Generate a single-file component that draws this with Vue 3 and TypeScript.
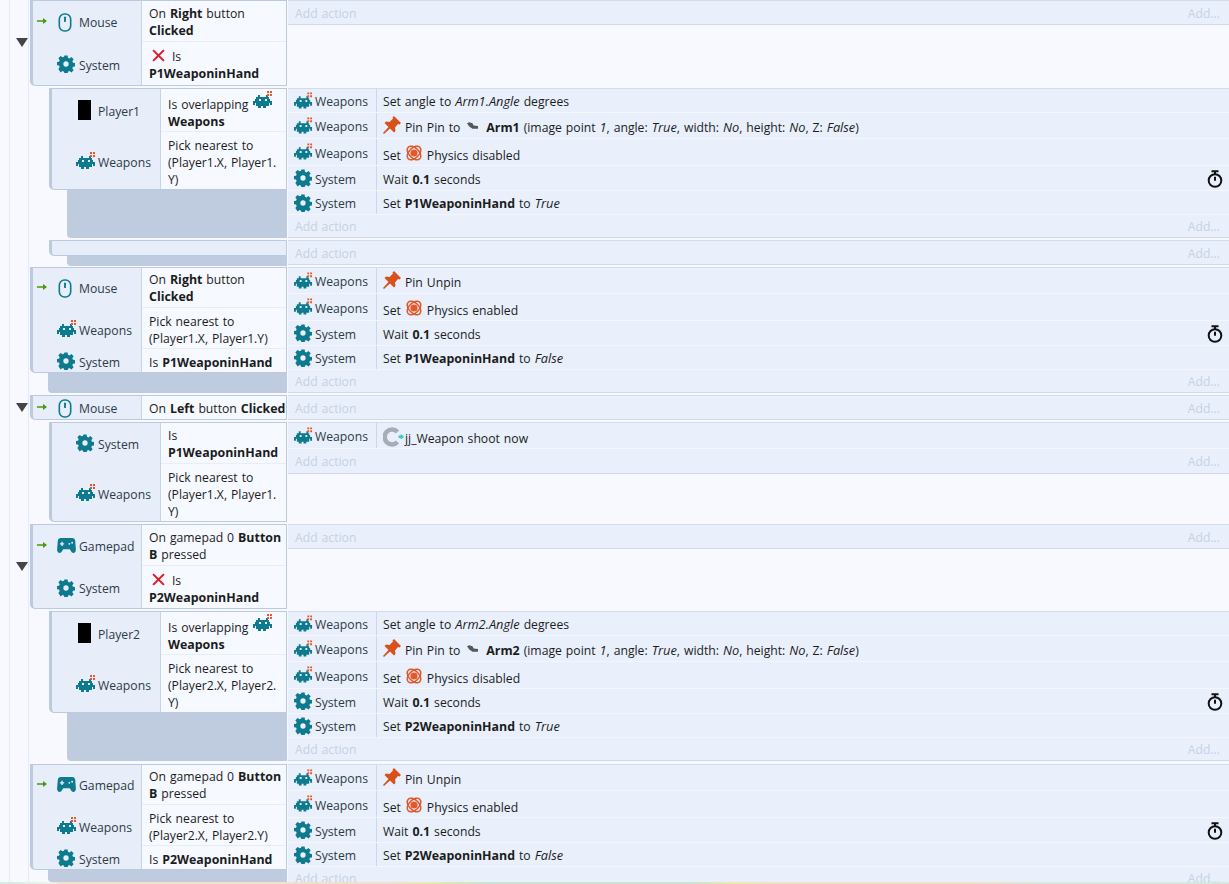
<script setup lang="ts">
type Cond = { obj: string; icon: string; text: string; h: number; arrow?: boolean }
type Act = { obj: string; icon: string; text: string; h: number; timer?: boolean }
type Ev = {
  indent: boolean
  toggle?: boolean
  conds: Cond[]
  acts: Act[]
  tail: number
  addH: number
  h: number
  gap: number
}
type Tok = { k: 't' | 'b' | 'i' | 'ic'; v: string }

const W = 'Weapons'
const S = 'System'
const acts1 = (n: string): Act[] => [
  { obj: W, icon: 'inv', text: `Set angle to ~Arm${n}.Angle~ degrees`, h: 24 },
  { obj: W, icon: 'inv', text: `{pin} Pin Pin to {arm} **Arm${n}** (image point ~1~, angle: ~True~, width: ~No~, height: ~No~, Z: ~False~)`, h: 26 },
  { obj: W, icon: 'inv', text: 'Set {atom} Physics disabled', h: 27 },
  { obj: S, icon: 'gear', text: 'Wait **0.1** seconds', h: 25, timer: true },
  { obj: S, icon: 'gear', text: `Set **P${n}WeaponinHand** to ~True~`, h: 24 },
]
const acts2 = (n: string): Act[] => [
  { obj: W, icon: 'inv', text: '{pin} Pin Unpin', h: 26 },
  { obj: W, icon: 'inv', text: 'Set {atom} Physics enabled', h: 27 },
  { obj: S, icon: 'gear', text: 'Wait **0.1** seconds', h: 25, timer: true },
  { obj: S, icon: 'gear', text: `Set **P${n}WeaponinHand** to ~False~`, h: 24 },
]
const narrow = (n: string) => `Pick nearest to (Player${n}.X, Player${n}.\u200bY)`
const wide = (n: string) => `Pick nearest to (Player${n}.X, Player${n}.Y)`

const events: Ev[] = [
  {
    indent: false, toggle: true, h: 86, gap: 2, tail: 0, addH: 23,
    conds: [
      { obj: 'Mouse', icon: 'mouse', text: 'On **Right** button **Clicked**', h: 41, arrow: true },
      { obj: S, icon: 'gear', text: '{x} Is **P1WeaponinHand**', h: 43 },
    ],
    acts: [],
  },
  {
    indent: true, h: 150, gap: 2, tail: 48, addH: 22,
    conds: [
      { obj: 'Player1', icon: 'rect', text: 'Is overlapping {inv} **Weapons**', h: 43 },
      { obj: W, icon: 'inv', text: narrow('1'), h: 57 },
    ],
    acts: acts1('1'),
  },
  { indent: true, h: 25, gap: 2, tail: 10, addH: 23, conds: [], acts: [] },
  {
    indent: false, h: 126, gap: 2, tail: 20, addH: 22,
    conds: [
      { obj: 'Mouse', icon: 'mouse', text: 'On **Right** button **Clicked**', h: 40, arrow: true },
      { obj: W, icon: 'inv', text: wide('1'), h: 41 },
      { obj: S, icon: 'gear', text: 'Is **P1WeaponinHand**', h: 23 },
    ],
    acts: acts2('1'),
  },
  {
    indent: false, toggle: true, h: 25, gap: 2, tail: 0, addH: 23,
    conds: [{ obj: 'Mouse', icon: 'mouse', text: 'On **Left** button **Clicked**', h: 23, arrow: true }],
    acts: [],
  },
  {
    indent: true, h: 100, gap: 2, tail: 0, addH: 24,
    conds: [
      { obj: S, icon: 'gear', text: 'Is **P1WeaponinHand**', h: 41 },
      { obj: W, icon: 'inv', text: narrow('1'), h: 57 },
    ],
    acts: [{ obj: W, icon: 'inv', text: '{spin}jj_Weapon shoot now', h: 26 }],
  },
  {
    indent: false, toggle: true, h: 85, gap: 2, tail: 0, addH: 23,
    conds: [
      { obj: 'Gamepad', icon: 'pad', text: 'On gamepad 0 **Button** **B** pressed', h: 41, arrow: true },
      { obj: S, icon: 'gear', text: '{x} Is **P2WeaponinHand**', h: 42 },
    ],
    acts: [],
  },
  {
    indent: true, h: 150, gap: 3, tail: 48, addH: 22,
    conds: [
      { obj: 'Player2', icon: 'rect', text: 'Is overlapping {inv} **Weapons**', h: 43 },
      { obj: W, icon: 'inv', text: narrow('2'), h: 57 },
    ],
    acts: acts1('2'),
  },
  {
    indent: false, h: 118, gap: 0, tail: 12, addH: 22,
    conds: [
      { obj: 'Gamepad', icon: 'pad', text: 'On gamepad 0 **Button** **B** pressed', h: 40, arrow: true },
      { obj: W, icon: 'inv', text: wide('2'), h: 41 },
      { obj: S, icon: 'gear', text: 'Is **P2WeaponinHand**', h: 23 },
    ],
    acts: acts2('2'),
  },
]

function parse(s: string): Tok[] {
  return s
    .split(/(\*\*.+?\*\*|~.+?~|\{\w+\})/)
    .filter(Boolean)
    .map((p): Tok => {
      if (p.startsWith('**')) return { k: 'b', v: p.slice(2, -2) }
      if (p.startsWith('~')) return { k: 'i', v: p.slice(1, -1) }
      if (p.startsWith('{')) return { k: 'ic', v: p.slice(1, -1) }
      return { k: 't', v: p }
    })
}
const rowClass = (s: string) => ({
  'has-pin': s.includes('{pin}'),
  'has-atom': s.includes('{atom}'),
  'has-spin': s.includes('{spin}'),
})
</script>

<template>
  <div class="sheet">
    <svg class="sprite" aria-hidden="true">
      <defs>
        <symbol id="i-inv" viewBox="0 0 20 18">
          <path fill="#0e7a8e" d="M5 4h2v2h6V4h2v2h1v2h1v2h2v4h-2v-2h-1v3h-3v2h-3v-2H8v2H5v-2H3v-3H2v2H0v-4h2V8h1V6h2zM6 8v2h2V8zm6 0v2h2V8z" />
          <path fill="#e8562a" d="M14 0h2v2h-2zM17 0h2v2h-2zM14 3h2v2h-2zM17 3h2v2h-2z" />
        </symbol>
        <symbol id="i-gear" viewBox="0 0 18 18">
          <path fill="#0e7a8e" fill-rule="evenodd" d="M7.300 0h3.400l.4 2.400 1.600.7 2-1.400 2.400 2.400-1.400 2 .7 1.600 2.400.4v3.400l-2.400.4-.7 1.600 1.400 2-2.400 2.400-2-1.400-1.600.7-.4 2.400H7.300l-.4-2.400-1.600-.7-2 1.400L.9 14.300l1.400-2-.7-1.600-2.400-.4V6.900l2.400-.4.7-1.600-1.400-2 2.400-2.400 2 1.400 1.600-.7zM9 6.200a2.800 2.800 0 1 0 0 5.600 2.800 2.800 0 0 0 0-5.600z" transform="translate(.5 .5) scale(.945)" />
        </symbol>
        <symbol id="i-mouse" viewBox="0 0 14 20">
          <rect x="1" y="1" width="12" height="18" rx="5.500" fill="none" stroke="#0e7a8e" stroke-width="1.700" />
          <rect x="6" y="3.600" width="2" height="6" rx="1" fill="#0e7a8e" />
        </symbol>
        <symbol id="i-pad" viewBox="0 0 20 16">
          <path fill="#0e7a8e" fill-rule="evenodd" d="M4 0h12c2 0 3 1.200 3.300 3L20 12c.2 2-1 4-2.600 4-1.200 0-1.900-.8-2.600-1.800L13.500 12h-7l-1.300 2.200C4.500 15.200 3.800 16 2.600 16 1 16-.2 14 0 12L.7 3C1 1.200 2 0 4 0zM4.500 4v1.500H3v1.500h1.500v1.500H6V7h1.500V5.500H6V4zM13 5.200a1 1 0 1 0 0 2 1 1 0 0 0 0-2zm3-1.200a1 1 0 1 0 0 2 1 1 0 0 0 0-2z" />
        </symbol>
        <symbol id="i-pin" viewBox="0 0 18 18">
          <path fill="#d8501c" d="M11 0 18 7l-1.500 1.500L15 8l-3 3.500.5 3.500-1.500 1.500-4-4L1 18l-1-1 5.500-6-4-4L3 5.500l3.500.5L10 2.500 9.500 1.500z" />
        </symbol>
        <symbol id="i-atom" viewBox="0 0 18 18">
          <g fill="none" stroke="#e2592b" stroke-width="1.600">
            <ellipse cx="9" cy="9" rx="8.200" ry="5" transform="rotate(45 9 9)" />
            <ellipse cx="9" cy="9" rx="8.200" ry="5" transform="rotate(-45 9 9)" />
          </g>
          <circle cx="9" cy="9" r="3.600" fill="#e2592b" />
        </symbol>
        <symbol id="i-arm" viewBox="0 0 10 6">
          <path fill="#56585c" d="M0 1 2 0l3 1 1 2 4 .5V6H5L2 4z" />
        </symbol>
        <symbol id="i-spin" viewBox="0 0 22 20">
          <path fill="none" stroke="#a5adb5" stroke-width="4.500" d="M14.500 5A7.400 7.400 0 1 0 14.500 15" />
          <path fill="#35d0c8" d="M15.500 8.500h2V7.500h1.500v1H20.500v2.500H19v1h-1.500v-1h-2z" />
        </symbol>
        <symbol id="i-timer" viewBox="0 0 16 18">
          <g fill="none" stroke="#111" stroke-width="2">
            <circle cx="8" cy="10.500" r="6.300" />
            <path d="M4.500 1.200h7M8 1v3M8 6.800v4" />
          </g>
        </symbol>
      </defs>
    </svg>

    <div class="guides"><i class="guide g1"></i><i class="guide g2"></i></div>

    <section
      v-for="(ev, ei) in events"
      :key="ei"
      class="event"
      :class="{ indented: ev.indent }"
      :style="{ height: ev.h + 'px', marginBottom: ev.gap + 'px' }"
    >
      <span v-if="ev.toggle" class="toggle"></span>

      <div class="left">
        <div class="conds" :class="{ empty: !ev.conds.length }">
          <div v-for="(c, ci) in ev.conds" :key="ci" class="cond" :style="{ height: c.h + 'px' }">
            <div class="who">
              <svg v-if="c.arrow" class="trigger" viewBox="0 0 10 8"><path d="M0 3.200h6V1l4 3-4 3V4.800H0z" fill="#4b9614" /></svg>
              <span v-if="c.icon === 'rect'" class="sprite-rect"></span>
              <svg v-else class="ic" :class="c.icon"><use :href="'#i-' + c.icon" /></svg>
              <span class="name">{{ c.obj }}</span>
            </div>
            <div class="what">
              <span>
                <template v-for="(t, ti) in parse(c.text)" :key="ti">
                  <b v-if="t.k === 'b'">{{ t.v }}</b>
                  <em v-else-if="t.k === 'i'">{{ t.v }}</em>
                  <svg v-else-if="t.k === 'ic' && t.v === 'x'" class="cross" viewBox="0 0 12 12"><path d="M1 1l10 10M11 1 1 11" stroke="#e5141e" stroke-width="1.800" fill="none" /></svg>
                  <svg v-else-if="t.k === 'ic'" class="inl inl-inv"><use :href="'#i-' + t.v" /></svg>
                  <template v-else>{{ t.v }}</template>
                </template>
              </span>
            </div>
          </div>
        </div>
        <div v-if="ev.tail" class="tail" :style="{ height: ev.tail + 'px' }"></div>
      </div>

      <div class="right">
        <div class="actions">
          <div v-for="(a, ai) in ev.acts" :key="ai" class="act" :style="{ height: a.h + 'px' }">
            <div class="act-who">
              <svg class="ic-a" :class="a.icon"><use :href="'#i-' + a.icon" /></svg>
              <span class="name">{{ a.obj }}</span>
            </div>
            <div class="act-what" :class="rowClass(a.text)">
              <template v-for="(t, ti) in parse(a.text)" :key="ti">
                <b v-if="t.k === 'b'">{{ t.v }}</b>
                <em v-else-if="t.k === 'i'">{{ t.v }}</em>
                <svg v-else-if="t.k === 'ic'" class="inl" :class="'inl-' + t.v"><use :href="'#i-' + t.v" /></svg>
                <template v-else>{{ t.v }}</template>
              </template>
            </div>
            <svg v-if="a.timer" class="timer"><use href="#i-timer" /></svg>
          </div>
          <div class="add" :style="{ height: ev.addH + 'px' }">
            <span>Add action</span><span>Add...</span>
          </div>
        </div>
      </div>
    </section>
    <div class="strip"></div>
  </div>
</template>

<style scoped>
.sheet {
  position: relative;
  width: 1229px;
  height: 884px;
  overflow: hidden;
  background: #f8f9ff;
  font-family: "Open Sans", "Noto Sans", sans-serif;
  font-size: 12.2px;
  word-spacing: 0.8px;
  line-height: 17px;
  color: #1c1c1c;
}
b { font-size: 12.4px; word-spacing: 0; }
em { font-size: 12.8px; }
.sprite { position: absolute; width: 0; height: 0; }
.guides { position: absolute; inset: 0; pointer-events: none; }
.guide { position: absolute; top: 0; bottom: 0; width: 1px; background: #e4e9f5; }
.g1 { left: 9px; }
.g2 { left: 28px; }

.event { position: relative; display: flex; padding-left: 30px; }
.event.indented { padding-left: 49px; }
.toggle {
  position: absolute;
  left: 16px;
  top: 50%;
  margin-top: -5px;
  border: 6px solid transparent;
  border-top: 9px solid #444;
  border-bottom: 0;
}
.left { width: 257px; flex: none; display: flex; flex-direction: column; }
.indented .left { width: 238px; }
.conds {
  flex: none;
  border: 1px solid #bccadf;
  border-left-width: 3px;
  border-radius: 0 0 0 5px;
  background: #e7eef9;
  overflow: hidden;
  box-sizing: border-box;
}
.conds.empty { height: 16px; }
.cond { display: flex; }
.who {
  position: relative;
  width: 109px;
  flex: none;
  display: flex;
  align-items: center;
  justify-content: flex-end;
  gap: 2px;
  padding-top: 1px;
  padding-right: 7px;
  box-sizing: border-box;
  border-right: 1px solid #c8d4e6;
}
.cond + .cond .who { padding-top: 3px; }
.name { color: #2e3a46; width: 55px; white-space: nowrap; word-spacing: 0; }
.what {
  flex: 1;
  min-width: 0;
  display: flex;
  align-items: center;
  padding-top: 1px;
  padding-left: 7px;
  background: #f6f9ff;
  border-bottom: 1px solid #e7eef9;
}
.cond + .cond .what { padding-top: 3px; }
.cond:last-child .what { border-bottom: 0; }
.trigger { position: absolute; left: 4px; top: 50%; margin-top: -5px; width: 10px; height: 8px; }
.ic { width: 18px; height: 18px; flex: none; margin-right: 2px; margin-bottom: 2px; }
.ic.inv { width: 20px; height: 18px; margin-right: 0; }
.ic.mouse { width: 14px; height: 19px; margin-right: 5px; margin-bottom: 0; }
.ic.pad { width: 19px; height: 15px; margin-right: 1px; }
.sprite-rect { width: 13px; height: 20px; background: #000; margin-right: 5px; margin-bottom: 2px; flex: none; }
.cross { width: 13px; height: 13px; margin: 0 3px; vertical-align: -1px; }
.tail {
  flex: none;
  margin-left: 18px;
  background: #bfcbdf;
  border-radius: 0 0 0 4px;
}

.right { flex: 1; min-width: 0; padding-left: 1px; }
.actions {
  background: #e9f0fb;
  border-top: 1px solid #d3dcec;
  border-bottom: 1px solid #cfd9ea;
}
.act { position: relative; display: flex; align-items: center; border-bottom: 1px solid #f3f6fd; box-sizing: border-box; }
.act-who {
  width: 89px;
  flex: none;
  height: 100%;
  display: flex;
  align-items: center;
  gap: 2px;
  padding-left: 6px;
  padding-top: 2px;
  box-sizing: border-box;
  border-right: 1px solid #cdd7e8;
}
.ic-a { width: 19px; height: 18px; flex: none; margin-bottom: 2px; }
.ic-a.gear { width: 18px; margin-left: 0; margin-right: 1px; }
.act-what { padding-left: 6px; padding-top: 2px; white-space: nowrap; }
.act-what.has-pin { padding-top: 1px; }
.act-what.has-atom { padding-top: 3px; }
.act-what.has-spin { padding-top: 3px; }
.inl { width: 18px; height: 18px; vertical-align: -3px; }
.inl-inv { width: 20px; height: 18px; vertical-align: 0; margin-left: 1px; }
.inl-pin { width: 18px; height: 18px; margin: 0; vertical-align: -2px; }
.inl-atom { width: 18px; height: 18px; margin: 0; vertical-align: -2px; }
.inl-arm { width: 11px; height: 7px; margin: 0 4px 0 3px; vertical-align: 3px; }
.inl-spin { width: 22px; height: 20px; margin-right: 0; vertical-align: -4px; }
.timer { position: absolute; right: 6px; top: 4px; width: 16px; height: 18px; }
.add {
  display: flex;
  align-items: center;
  justify-content: space-between;
  padding: 1px 9px 0 7px;
  color: #c6d1e4;
  box-sizing: border-box;
}
.strip {
  position: absolute;
  left: 0;
  right: 0;
  bottom: 0;
  height: 2px;
  background: linear-gradient(90deg, #d5ebe2 0, #eaf3e6 4%, #f3e0c8 5%, #f3e0c8 32%, #e8e8b0 35%, #c8e6d0 40%, #c8e6d0 56%, #f0e8b0 60%, #f3dfc5 63%, #f3dfc5 80%, #d5e8dc 85%, #d5e8dc 100%);
}
</style>
